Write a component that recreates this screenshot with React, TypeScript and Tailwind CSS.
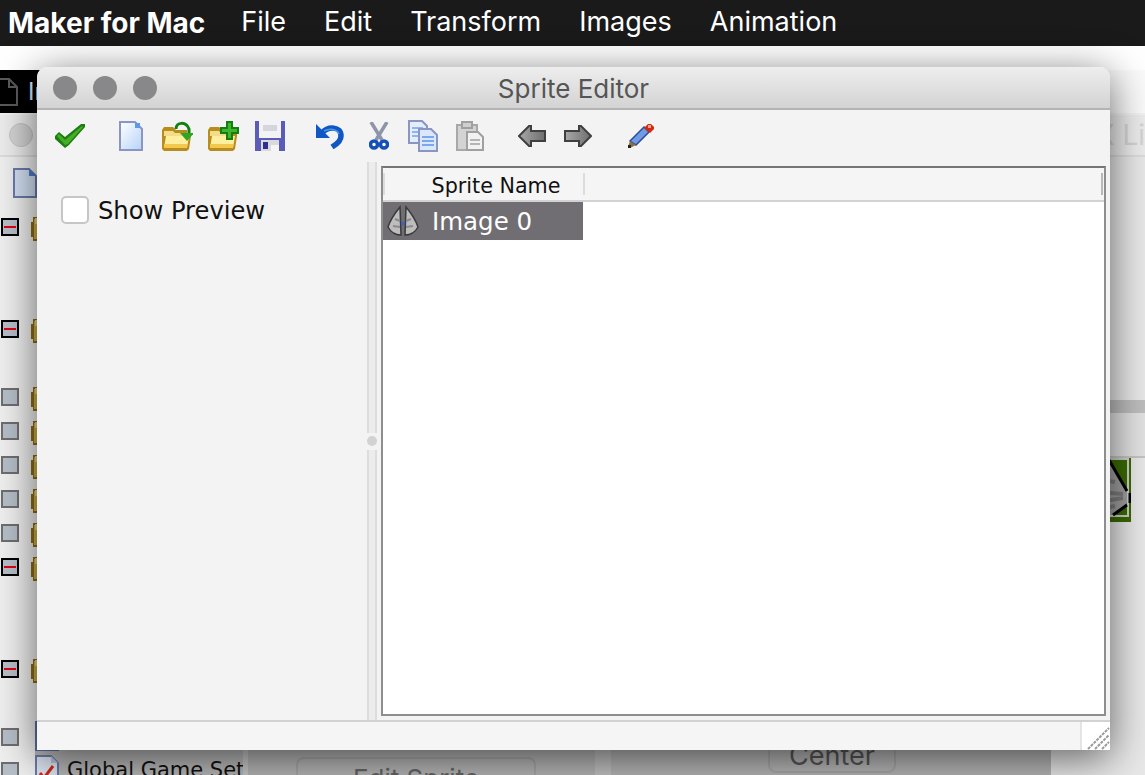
import React from 'react';

const rows = ['minus', '', '', 'minus', '', 'box', 'box', 'box', 'box', 'box', 'minus', '', '', 'minus', '', 'box', 'box'];

const FolderEdge = () => (
  <svg width="10" height="26" viewBox="0 0 10 26" className="ml-[11px] -mt-[3px]">
    <path d="M3 2h7v24H3V22H1V7h2z" fill="#8f6c14" />
    <path d="M4 4h6v20H4z" fill="#c9b04c" />
    <path d="M5 3h5v6H5z" fill="#e6d689" />
  </svg>
);

const TreeRow: React.FC<{ kind: string; index: number }> = ({ kind, index }) => (
  <div className="h-[34px] shrink-0 flex items-start">
    {kind === 'minus' && (
      <div className="ml-[1px] w-[18px] h-[18px] shrink-0 border-2 border-black bg-[#b6bec8] flex items-center justify-center">
        <div className="w-[12px] h-[2px] bg-[#e4000f]" />
      </div>
    )}
    {kind === 'box' && <div className="ml-[1px] w-[18px] h-[18px] shrink-0 border-2 border-[#6e6e6e] bg-[#b6bec8]" />}
    {kind !== '' && index < 15 && <FolderEdge />}
    {index >= 15 && (
      <div className="ml-[16px] flex-1 min-w-0 h-[34px] bg-[#b8b8b8] flex items-start">
        {index === 15 && (
          <svg width="24" height="30" viewBox="0 0 24 30" className="-mt-[7px] shrink-0">
            <path d="M1 1h15l7 7v21H1z" fill="#c6d3ea" stroke="#5a6f9f" strokeWidth="2" />
          </svg>
        )}
        {index === 16 && (
          <>
            <svg width="24" height="30" viewBox="0 0 24 30" className="-mt-[7px] shrink-0">
              <path d="M1 1h15l7 7v21H1z" fill="#dfe6f2" stroke="#6b7cab" strokeWidth="2" />
              <path d="M16 1l7 7h-7z" fill="#b7c4dc" />
              <path d="M5 18l4 5 9-12" fill="none" stroke="#d02a1a" strokeWidth="3" />
            </svg>
            <span className="ml-[8px] -mt-[7px] text-[21px] text-[#111] whitespace-nowrap font-['DejaVu_Sans',sans-serif]">Global Game Set</span>
          </>
        )}
      </div>
    )}
  </div>
);

const Backdrop = () => (
  <div className="flex flex-col h-[705px] mt-[24px] overflow-hidden">
    <div className="h-[43px] shrink-0 flex bg-[#fafafa]">
      <div className="w-[300px] bg-black flex items-center">
        <svg width="18" height="28" viewBox="0 0 18 28">
          <path d="M-2 1h11l8 8v18H-2z" fill="none" stroke="#5a5a5a" strokeWidth="2" />
          <path d="M9 1v8h8" fill="none" stroke="#5a5a5a" strokeWidth="2" />
        </svg>
        <span className="ml-[10px] text-[24px] text-[#cfe6ff] font-['Inter',sans-serif]">Image</span>
      </div>
    </div>
    <div className="h-[44px] shrink-0 flex items-center justify-between bg-[#ececec] border-y-2 border-[#dcdcdc] border-t-[#f2f2f2] overflow-hidden">
      <div className="ml-[9px] w-[24px] h-[24px] rounded-full bg-[#d4d4d4] border border-[#c4c4c4]" />
      <span className="text-[28px] text-[#d4d4d4] font-['Inter',sans-serif] whitespace-nowrap">X Li</span>
    </div>
    <div className="flex-1 flex min-h-0">
      <div className="w-[248px] shrink-0 bg-[#efefef] flex flex-col overflow-hidden border-r-[5px] border-[#c8c8c8]">
        <div className="h-[61px] shrink-0 pt-[11px] pl-[13px]">
          <svg width="24" height="30" viewBox="0 0 24 30">
            <path d="M1 1h15l7 7v21H1z" fill="#d3e0f3" stroke="#6b7cab" strokeWidth="2" />
            <path d="M16 1l7 7h-7z" fill="#4a7fc9" />
          </svg>
        </div>
        {rows.map((r, i) => (
          <TreeRow key={i} kind={r} index={i} />
        ))}
      </div>
      <div className="w-[363px] shrink-0 bg-[#b6b6b6] border-r-[16px] border-[#c2c2c2] pt-[600px] pl-[48px]">
        <div className="w-[240px] h-[40px] rounded-[8px] border-2 border-[#a8a8a8] flex justify-center text-[26px] text-[#666] font-['Inter',sans-serif]">Edit Sprite</div>
      </div>
      <div className="w-[440px] shrink-0 bg-[#b6b6b6] pt-[583px] pl-[157px]">
        <div className="w-[128px] h-[33px] rounded-b-[8px] border-2 border-[#a8a8a8] flex items-center justify-center text-[27px] text-[#555] font-['Inter',sans-serif]">Center</div>
      </div>
      <div className="flex-1 bg-[#e8e8e8] flex flex-col">
        <div className="h-[243px] shrink-0" />
        <div className="h-[13px] shrink-0 bg-[#bebebe]" />
        <div className="h-[45px] shrink-0 bg-[#e2e2e2] border-b-2 border-[#c4c4c4]" />
        <div className="self-end mr-[14px]">
          <svg width="60" height="64" viewBox="0 0 60 64" className="block">
            <rect width="60" height="64" fill="#3a6b00" />
            <path d="M0 1h57v57H0" fill="none" stroke="#cfcfcf" strokeWidth="2" />
            <path d="M0 2h37l19 31v12L42 57H0z" fill="#a0a0a0" />
            <path d="M30 22l14 2M26 34l26 2M28 44l24-4M34 50l10-2" stroke="#7e7e7e" strokeWidth="4" />
            <path d="M38 2l18 31M56 47L42 57" fill="none" stroke="#000" strokeWidth="3" />
            <path d="M59 35v10" stroke="#000" strokeWidth="3" />
          </svg>
        </div>
      </div>
    </div>
  </div>
);

const Check = () => (
  <svg width="30" height="24" viewBox="0 0 30 24">
    <path d="M0 12l4-4 6 5L26 0h4v3L14 21l-4 3L0 15z" fill="#1c7e10" />
    <path d="M2 12l2-2 6 6L27 2l1 1-15 17-3 1z" fill="#46ad27" />
  </svg>
);

const NewDoc = () => (
  <svg width="24" height="30" viewBox="0 0 24 30">
    <defs>
      <linearGradient id="docg" x1="0" y1="0" x2="1" y2="1">
        <stop offset="0" stopColor="#ffffff" />
        <stop offset="1" stopColor="#b5d3f7" />
      </linearGradient>
    </defs>
    <path d="M1 1h15l7 7v21H1z" fill="url(#docg)" stroke="#8a95c4" strokeWidth="2" />
    <path d="M16 2h5v5h-5z" fill="#5b9be8" />
  </svg>
);

const FolderBase = () => (
  <>
    <path d="M1 9l2-3h9l3 3h11v4h4v2l-2 13-2 2H3l-2-2z" fill="#b88d1c" />
    <path d="M3 10h9l2 2h10v3H3z" fill="#f3dc8a" />
    <path d="M5 15h23l-2 12H3z" fill="#ffef9e" />
    <path d="M3 23h23v4H3z" fill="#f2c84f" />
  </>
);

const OpenFolder = () => (
  <svg width="32" height="30" viewBox="0 0 32 30">
    <FolderBase />
    <path d="M15 8c0-7 10-8 13 0v4" fill="none" stroke="#12800f" strokeWidth="3" />
    <path d="M19 12h14l-7 8z" fill="#2fa524" />
  </svg>
);

const NewFolder = () => (
  <svg width="32" height="30" viewBox="0 0 32 30">
    <FolderBase />
    <path d="M19 0h7v6h6v7h-6v6h-7v-6h-6V6h6z" fill="#137f10" />
    <path d="M21 2h3v6h6v3h-6v6h-3v-6h-6V8h6z" fill="#3fb62c" />
  </svg>
);

const Save = () => (
  <svg width="30" height="30" viewBox="0 0 30 30">
    <path d="M0 0h30v30H0z" fill="#5a5cb8" />
    <path d="M4 0h22v17H4z" fill="#f3f3f6" />
    <path d="M8 4h14v6H8z" fill="#d5d5de" />
    <path d="M6 19h18v11H6z" fill="#d9d9de" />
    <path d="M8 21h5v7H8z" fill="#2f2f8e" />
    <path d="M16 24h8v6h-8z" fill="#f4f4f4" />
  </svg>
);

const Undo = () => (
  <svg width="30" height="26" viewBox="0 0 30 26">
    <path d="M7 10C13 3 26 3 26 13c0 6-6 9-9 11" fill="none" stroke="#0e57c4" strokeWidth="5.5" />
    <path d="M1 1v14h14z" fill="#0e57c4" />
    <path d="M9 8c6-3 13-2 15 3" fill="none" stroke="#4a97ea" strokeWidth="1.5" />
  </svg>
);

const Scissors = () => (
  <svg width="20" height="28" viewBox="0 0 20 28">
    <path d="M2 0l11 18M18 0L7 18" stroke="#8d95a8" strokeWidth="3.5" fill="none" />
    <circle cx="5" cy="22.5" r="3.5" fill="#fff" stroke="#1450b8" strokeWidth="3.5" />
    <circle cx="15" cy="22.5" r="3.5" fill="#fff" stroke="#1450b8" strokeWidth="3.5" />
  </svg>
);

const Copy = () => (
  <svg width="30" height="32" viewBox="0 0 30 32">
    <path d="M1 1h13l5 5v17H1z" fill="#e4edfb" stroke="#8a95c4" strokeWidth="2" />
    <path d="M4 8h11M4 12h11M4 16h11" stroke="#8fb5ef" strokeWidth="2" />
    <path d="M11 9h12l6 6v16H11z" fill="#dbe7fb" stroke="#8a95c4" strokeWidth="2" />
    <path d="M14 17h12M14 21h12M14 25h12" stroke="#7aa8ec" strokeWidth="2" />
  </svg>
);

const Paste = () => (
  <svg width="28" height="30" viewBox="0 0 28 30">
    <path d="M1 4h20v25H1z" fill="#d3d3d3" stroke="#a8a8a8" strokeWidth="2" />
    <path d="M6 1h10v6H6z" fill="#cfcfcf" stroke="#a0a0a0" strokeWidth="2" />
    <path d="M11 11h11l5 5v13H11z" fill="#f2f2f2" stroke="#a0a0a0" strokeWidth="2" />
    <path d="M14 19h10M14 23h10" stroke="#b5b5b5" strokeWidth="2" />
  </svg>
);

const ArrowLeft = () => (
  <svg width="28" height="22" viewBox="0 0 28 22">
    <defs>
      <linearGradient id="arl" x1="0" y1="0" x2="1" y2="0">
        <stop offset="0" stopColor="#a8a8a8" />
        <stop offset="1" stopColor="#6e6e6e" />
      </linearGradient>
    </defs>
    <path d="M1 11L11 1h2v5h14v10H13v5h-2z" fill="url(#arl)" stroke="#404040" strokeWidth="2" />
  </svg>
);

const ArrowRight = () => (
  <svg width="28" height="22" viewBox="0 0 28 22">
    <path d="M27 11L17 1h-2v5H1v10h14v5h2z" fill="url(#arl)" stroke="#404040" strokeWidth="2" />
  </svg>
);

const Pencil = () => (
  <svg width="26" height="24" viewBox="0 0 26 24">
    <path d="M2 17L16 3l5 5L8 21z" fill="#6f9be6" stroke="#2e4b95" strokeWidth="1.5" />
    <path d="M2 17l6 4-6 3-2-1z" fill="#8a6f44" />
    <path d="M0 21h3v3H0z" fill="#222" />
    <path d="M16 4l4-4h3l3 3v2l-4 4z" fill="#d22a10" />
    <path d="M20 1h3v3h-3z" fill="#f0a090" />
  </svg>
);

const SpriteIcon = () => (
  <svg width="32" height="32" viewBox="0 0 32 32">
    <path d="M13 2C8 8 3 16 1 22c3 6 9 8 13 8zM19 2c5 6 10 14 12 20-3 6-9 8-13 8z" fill="#bdbdbd" stroke="#3a3a3a" strokeWidth="1.5" />
    <path d="M8 14l5 2M6 21l7 1M24 14l-5 2M26 21l-7 1" stroke="#8a8a8a" strokeWidth="2" />
    <path d="M14 17h4v3h-4z" fill="#3c5fc0" />
  </svg>
);

const Grip = () => (
  <svg width="24" height="24" viewBox="0 0 24 24">
    <path d="M2 23L23 2M9 23L23 9M16 23l7-7" stroke="#9a9a9a" strokeWidth="2" strokeDasharray="3 1" fill="none" />
  </svg>
);

const SpriteEditor = () => (
  <div className="absolute left-[37px] top-[67px] w-[1073px] h-[683px] flex flex-col rounded-t-[10px] bg-[#f3f3f3] shadow-[0_8px_40px_rgba(0,0,0,0.6)]">
    <div className="h-[43px] shrink-0 relative flex items-center rounded-t-[10px] bg-gradient-to-b from-[#eeeeee] to-[#d3d3d3] border-b-2 border-[#b4b4b4]">
      <div className="flex gap-[16px] pl-[16px]">
        <div className="w-[24px] h-[24px] rounded-full bg-[#88878a]" />
        <div className="w-[24px] h-[24px] rounded-full bg-[#88878a]" />
        <div className="w-[24px] h-[24px] rounded-full bg-[#88878a]" />
      </div>
      <span className="absolute inset-x-0 top-[6px] text-center text-[26px] leading-[32px] text-[#555] font-['Inter',sans-serif]">Sprite Editor</span>
    </div>
    <div className="h-[52px] shrink-0 flex items-center pl-[18px]">
      <Check />
      <div className="ml-[34px]"><NewDoc /></div>
      <div className="ml-[18px]"><OpenFolder /></div>
      <div className="ml-[14px]"><NewFolder /></div>
      <div className="ml-[16px]"><Save /></div>
      <div className="ml-[30px]"><Undo /></div>
      <div className="ml-[24px]"><Scissors /></div>
      <div className="ml-[19px]"><Copy /></div>
      <div className="ml-[18px]"><Paste /></div>
      <div className="ml-[34px]"><ArrowLeft /></div>
      <div className="ml-[18px]"><ArrowRight /></div>
      <div className="ml-[36px]"><Pencil /></div>
    </div>
    <div className="flex-1 flex min-h-0">
      <div className="w-[330px] shrink-0 pt-[32px] pl-[24px]">
        <label className="flex items-center gap-[9px]">
          <span className="w-[28px] h-[28px] rounded-[5px] bg-white border-2 border-[#c6c6c6]" />
          <span className="pt-[3px] text-[24.2px] leading-[28px] text-[#111] font-['DejaVu_Sans',sans-serif]">Show Preview</span>
        </label>
      </div>
      <div className="w-[10px] shrink-0 flex flex-col items-center">
        <div className="flex-1 w-full bg-[#ececec] border-x-2 border-[#dcdcdc]" />
        <div className="h-[17px] w-full flex items-center">
          <div className="w-[10px] h-[10px] rounded-full bg-[#d2d2d2]" />
        </div>
        <div className="flex-1 w-full bg-[#ececec] border-x-2 border-[#dcdcdc]" />
      </div>
      <div className="w-[725px] ml-[4px] mt-[4px] mb-[4px] border-2 border-[#8e8e8e] border-t-[#757575] bg-white flex flex-col">
        <div className="h-[34px] shrink-0 flex items-center bg-[#f5f5f5] border-b-2 border-[#d2d2d2]">
          <div className="w-[2px] h-[22px] bg-[#dcdcdc]" />
          <div className="w-[198px] text-center pl-[24px] pt-[6px] text-[20.7px] text-[#111] whitespace-nowrap font-['DejaVu_Sans',sans-serif]">Sprite Name</div>
          <div className="w-[2px] h-[22px] bg-[#dcdcdc]" />
          <div className="flex-1" />
          <div className="w-[2px] h-[22px] bg-[#b8b8b8] mr-[1px]" />
        </div>
        <div className="w-[200px] h-[38px] flex items-center bg-[#706e72] pl-[4px]">
          <SpriteIcon />
          <span className="ml-[13px] pt-[2px] text-[24.5px] text-white whitespace-nowrap font-['DejaVu_Sans',sans-serif]">Image 0</span>
        </div>
      </div>
    </div>
    <div className="h-[30px] shrink-0 flex bg-[#f5f5f5] border-t-2 border-[#d2d2d2]">
      <div className="flex-1" />
      <div className="w-[30px] border-l-2 border-[#e4e4e4] bg-white flex items-end justify-end">
        <Grip />
      </div>
    </div>
  </div>
);

export default function App() {
  return (
    <div className="relative w-[1145px] h-[775px] overflow-hidden bg-white">
      <div className="h-[46px] flex items-center bg-[#1a1a1b] text-white text-[27px] gap-[38px] pl-[8px] pb-[1px] font-['Inter',sans-serif]">
        <span className="font-bold text-[28px] -mr-[2px]">Maker for Mac</span>
        <span>File</span>
        <span>Edit</span>
        <span>Transform</span>
        <span>Images</span>
        <span>Animation</span>
      </div>
      <Backdrop />
      <SpriteEditor />
    </div>
  );
}
